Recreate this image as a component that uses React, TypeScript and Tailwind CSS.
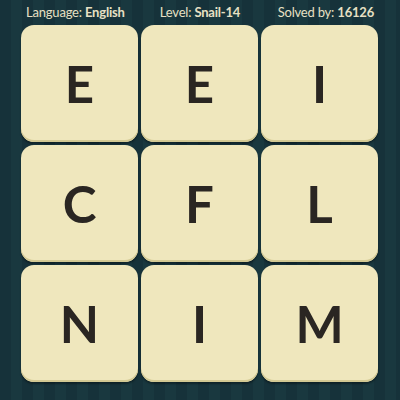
import React from 'react'

const letters = ['E', 'E', 'I', 'C', 'F', 'L', 'N', 'I', 'M']

function Tile({ letter }: { letter: string }) {
  return (
    <div className="flex h-[117px] w-[117px] items-center justify-center rounded-[13px] bg-[#efe7bd] shadow-[inset_0_-2px_0_#d3c993,0_2px_2px_rgba(0,0,0,0.35)]">
      <span className="text-[51px] leading-none font-bold text-[#2a2622] [font-family:Lato,'Noto_Sans',sans-serif]">
        {letter}
      </span>
    </div>
  )
}

export default function App() {
  return (
    <div className="flex h-[400px] w-[400px] flex-col bg-[repeating-linear-gradient(90deg,#16323a_0px,#16323a_11px,#19383f_11px,#19383f_22px)] [font-family:Lato,'Noto_Sans',sans-serif]">
      {/* header */}
      <div className="grid h-[25px] grid-cols-3 items-center px-[26px] text-[13px] tracking-[-0.2px] text-[#e7e0c4]">
        <div className="text-left whitespace-nowrap">
          Language: <span className="font-bold">English</span>
        </div>
        <div className="text-center whitespace-nowrap">
          Level: <span className="font-bold">Snail-14</span>
        </div>
        <div className="text-right whitespace-nowrap">
          Solved by: <span className="font-bold">16126</span>
        </div>
      </div>

      {/* board */}
      <div className="grid w-fit grid-cols-3 gap-[3px] pl-[21px]">
        {letters.map((l, i) => (
          <Tile key={i} letter={l} />
        ))}
      </div>
    </div>
  )
}
